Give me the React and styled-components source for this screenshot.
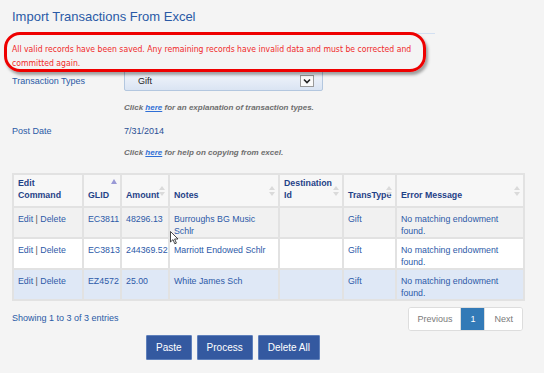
import React from 'react';
import styled, { createGlobalStyle } from 'styled-components';

const GlobalStyle = createGlobalStyle`
  html, body {
    margin: 0;
    padding: 0;
    background: #f4f4f4;
    font-family: "Liberation Sans", Arial, sans-serif;
  }
`;

const Page = styled.div`
  position: relative;
  width: 544px;
  height: 373px;
  overflow: hidden;
  padding: 9px 0 0 12px;
  box-sizing: border-box;
  background: #f4f4f4;
`;

const Title = styled.h1`
  margin: 0;
  font-size: 13px;
  font-weight: normal;
  color: #2a5aa6;
  line-height: 16px;
`;

const MessageWrap = styled.div`
  position: relative;
  width: 423px;
  margin-top: 8px;
  border-top: 1px solid #d3e0f2;
  padding: 8px 0 0 0;
  height: 30px;
`;

const Message = styled.p`
  margin: 0;
  font-family: "DejaVu Sans Condensed", "DejaVu Sans", sans-serif;
  font-size: 8.6px;
  line-height: 14px;
  color: #f02a2a;
  white-space: nowrap;
`;

const Annotation = styled.div`
  position: absolute;
  left: -8px;
  top: -2px;
  width: 416px;
  height: 34px;
  border: 3.5px solid #ee0000;
  border-radius: 16px;
  box-shadow: 2px 3px 3px rgba(0, 0, 0, 0.35);
  pointer-events: none;
`;

const FormGrid = styled.div`
  display: grid;
  grid-template-columns: 112px 1fr;
  align-items: center;
  margin-top: -2px;
`;

const Label = styled.div`
  font-size: 9px;
  color: #2a5aa6;
  line-height: 20px;
`;

const Value = styled.div`
  font-size: 9px;
  color: #2a4f95;
  line-height: 20px;
`;

const Select = styled.div`
  width: 199px;
  height: 21px;
  box-sizing: border-box;
  border: 1px solid #b3c7df;
  border-radius: 2px;
  background: linear-gradient(#f3f6fb, #dae4f3);
  display: flex;
  align-items: center;
  justify-content: space-between;
  padding: 0 8px 0 13px;
  font-size: 9px;
  color: #222;
`;

const ArrowBox = styled.span`
  width: 14px;
  height: 12px;
  box-sizing: border-box;
  border: 1px solid #9a9a9a;
  background: #fafafa;
  display: flex;
  align-items: center;
  justify-content: center;
`;

const Note = styled.div`
  grid-column: 2;
  font-size: 8px;
  font-style: italic;
  font-weight: bold;
  color: #6e6e6e;
  line-height: 12px;
  padding: ${p => p.$pad || '0'};
  a {
    color: #2f6fd6;
    text-decoration: underline;
  }
`;

const Table = styled.table`
  margin-top: 14px;
  border-collapse: collapse;
  width: 511px;
  table-layout: fixed;
  font-size: 8.8px;
  color: #2d5aa8;
  border: 2px solid #dedede;
`;

const Th = styled.th`
  position: relative;
  text-align: left;
  vertical-align: bottom;
  font-weight: bold;
  color: #1f4288;
  background: #f7f7f7;
  border: 2px solid #e2e2e2;
  padding: 0 3px 5px 4px;
  height: 26px;
  line-height: 12px;
`;

const SortIcon = styled.svg`
  position: absolute;
  right: 3px;
  top: ${p => (p.$top ? '4px' : '11px')};
`;

const Row = styled.tr`
  background: ${p => p.$bg};
`;

const Td = styled.td`
  vertical-align: top;
  border: 2px solid #e2e2e2;
  padding: 5px 2px 0 4px;
  height: 24px;
  line-height: 12px;
`;

const Sep = styled.span`
  color: #555;
`;

const FooterRow = styled.div`
  width: 511px;
  display: flex;
  justify-content: space-between;
  align-items: center;
  margin-top: 6px;
`;

const Info = styled.div`
  font-size: 9px;
  color: #2a5aa6;
  margin-top: -3px;
`;

const Pager = styled.div`
  display: flex;
  border: 1px solid #dddddd;
  border-radius: 3px;
  background: #fff;
  height: 22px;
  overflow: hidden;
`;

const PageItem = styled.span`
  display: flex;
  align-items: center;
  padding: 0 ${p => p.$px || 9}px;
  font-size: 9px;
  color: ${p => (p.$active ? '#fff' : '#7a7a7a')};
  background: ${p => (p.$active ? '#337ab7' : '#fff')};
  border-left: ${p => (p.$first ? 'none' : '1px solid #ddd')};
`;

const Actions = styled.div`
  display: flex;
  gap: 5px;
  margin: 4px 0 0 134px;
`;

const Button = styled.button`
  height: 25px;
  padding: 0 ${p => p.$px || 9}px;
  border: 1px solid #5f80bb;
  background: #3459a0;
  color: #fff;
  font-family: "Liberation Sans", Arial, sans-serif;
  font-size: 10px;
  border-radius: 1px;
`;

const Cursor = styled.svg`
  position: absolute;
  left: 170px;
  top: 231px;
`;

const SortBoth = () => (
  <SortIcon width="6" height="10" viewBox="0 0 6 10">
    <path d="M3 0 L6 4 L0 4 Z" fill="#dadada" />
    <path d="M3 10 L6 6 L0 6 Z" fill="#dadada" />
  </SortIcon>
);

const SortUp = () => (
  <SortIcon $top width="6" height="6" viewBox="0 0 6 6">
    <path d="M3 0 L6 5 L0 5 Z" fill="#9a9ad6" />
  </SortIcon>
);

const rows = [
  { glid: 'EC3811', amount: '48296.13', notes: 'Burroughs BG Music Schlr', bg: '#f1f1f1' },
  { glid: 'EC3813', amount: '244369.52', notes: 'Marriott Endowed Schlr', bg: '#ffffff' },
  { glid: 'EZ4572', amount: '25.00', notes: 'White James Sch', bg: '#dfe8f6' },
];

export default function App() {
  return (
    <>
      <GlobalStyle />
      <Page>
        <Title>Import Transactions From Excel</Title>
        <MessageWrap>
          <Message>
            All valid records have been saved. Any remaining records have invalid data and must be corrected and
            <br />
            committed again.
          </Message>
          <Annotation />
        </MessageWrap>

        <FormGrid>
          <Label>Transaction Types</Label>
          <Select>
            <span>Gift</span>
            <ArrowBox>
              <svg width="8" height="6" viewBox="0 0 8 6">
                <path d="M1 1.5 L4 4.5 L7 1.5" fill="none" stroke="#222" strokeWidth="1.6" />
              </svg>
            </ArrowBox>
          </Select>
          <Note $pad="11px 0 7px 0">
            Click <a>here</a> for an explanation of transaction types.
          </Note>
          <Label>Post Date</Label>
          <Value>7/31/2014</Value>
          <Note $pad="6px 0 0 0">
            Click <a>here</a> for help on copying from excel.
          </Note>
        </FormGrid>

        <Table>
          <colgroup>
            <col style={{ width: 70 }} />
            <col style={{ width: 38 }} />
            <col style={{ width: 48 }} />
            <col style={{ width: 110 }} />
            <col style={{ width: 64 }} />
            <col style={{ width: 53 }} />
            <col style={{ width: 128 }} />
          </colgroup>
          <thead>
            <tr>
              <Th>Edit<br />Command</Th>
              <Th>GLID<SortUp /></Th>
              <Th>Amount<SortBoth /></Th>
              <Th>Notes<SortBoth /></Th>
              <Th>Destination<br />Id<SortBoth /></Th>
              <Th>TransType<SortBoth /></Th>
              <Th>Error Message<SortBoth /></Th>
            </tr>
          </thead>
          <tbody>
            {rows.map(r => (
              <Row key={r.glid} $bg={r.bg}>
                <Td>Edit <Sep>|</Sep> Delete</Td>
                <Td>{r.glid}</Td>
                <Td>{r.amount}</Td>
                <Td>{r.notes}</Td>
                <Td></Td>
                <Td>Gift</Td>
                <Td>No matching endowment found.</Td>
              </Row>
            ))}
          </tbody>
        </Table>

        <FooterRow>
          <Info>Showing 1 to 3 of 3 entries</Info>
          <Pager>
            <PageItem $first $px={8}>Previous</PageItem>
            <PageItem $active $px={9}>1</PageItem>
            <PageItem $px={9}>Next</PageItem>
          </Pager>
        </FooterRow>

        <Actions>
          <Button $px={9}>Paste</Button>
          <Button $px={9}>Process</Button>
          <Button $px={9}>Delete All</Button>
        </Actions>

        <Cursor width="9" height="14" viewBox="0 0 9 14">
          <path d="M0.5 0.5 L0.5 11 L3 8.6 L4.8 12.8 L6.4 12.1 L4.6 8 L8 8 Z" fill="#fff" stroke="#333" strokeWidth="0.9" />
        </Cursor>
      </Page>
    </>
  );
}
